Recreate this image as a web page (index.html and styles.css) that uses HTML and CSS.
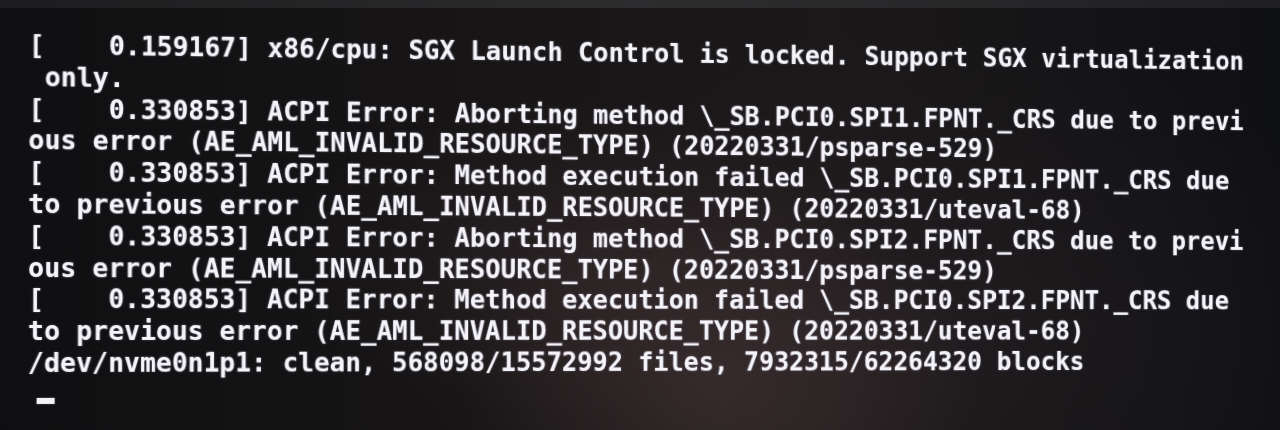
FILE: index.html
```html
<!DOCTYPE html>
<html lang="en">
<head>
    <meta charset="UTF-8">
    <meta name="viewport" content="width=device-width, initial-scale=1.0">
    <title>Boot console</title>
    <link rel="stylesheet" href="styles.css">
</head>
<body>
    <div class="bezel"></div>
    <div class="screen">
        <pre class="console">[    0.159167] x86/cpu: SGX Launch Control is locked. Support SGX virtualization
 only.
[    0.330853] ACPI Error: Aborting method \_SB.PCI0.SPI1.FPNT._CRS due to previ
ous error (AE_AML_INVALID_RESOURCE_TYPE) (20220331/psparse-529)
[    0.330853] ACPI Error: Method execution failed \_SB.PCI0.SPI1.FPNT._CRS due
to previous error (AE_AML_INVALID_RESOURCE_TYPE) (20220331/uteval-68)
[    0.330853] ACPI Error: Aborting method \_SB.PCI0.SPI2.FPNT._CRS due to previ
ous error (AE_AML_INVALID_RESOURCE_TYPE) (20220331/psparse-529)
[    0.330853] ACPI Error: Method execution failed \_SB.PCI0.SPI2.FPNT._CRS due
to previous error (AE_AML_INVALID_RESOURCE_TYPE) (20220331/uteval-68)
/dev/nvme0n1p1: clean, 568098/15572992 files, 7932315/62264320 blocks
<span class="cursor"></span></pre>
    </div>
</body>
</html>
```

FILE: styles.css
```css
/* page */
html, body {
    margin: 0;
    height: 100%;
    overflow: hidden;
}

body {
    width: 1280px;
    height: 430px;
    background-color: #131315;
    background-image:
        radial-gradient(ellipse 260px 200px at 720px 390px, rgba(95, 72, 70, 0.35), transparent),
        radial-gradient(ellipse 300px 160px at 580px 260px, rgba(70, 55, 55, 0.3), transparent),
        radial-gradient(ellipse 500px 300px at 900px 330px, rgba(50, 40, 45, 0.35), transparent),
        linear-gradient(90deg, #0f0f11 0%, #191617 45%, #1b1819 65%, #0f1013 100%);
}

/* top edge of the monitor */
.bezel {
    height: 8px;
    background: linear-gradient(90deg, #252527, #3a3a3c 50%, #2a2a2c);
    opacity: 0.6;
}

.screen {
    padding: 21px 0 0 28px;
}

/* console text, photographed a little off-axis */
.console {
    margin: 0;
    font-family: "DejaVu Sans Mono", "Liberation Mono", monospace;
    font-weight: bold;
    font-size: 26.8px;
    line-height: 31.8px;
    color: #f4f3f8;
    text-shadow: 0 0 2px rgba(200, 200, 255, 0.45);
    transform-origin: 0 246px;
    transform: perspective(1000px) rotateY(2.7deg) rotate(0.15deg);
    white-space: pre;
}

.cursor {
    display: inline-block;
    width: 18px;
    height: 6px;
    margin-left: 9px;
    background-color: #f4f3f8;
    vertical-align: 0;
    box-shadow: 0 0 2px rgba(200, 200, 255, 0.45);
}
```
